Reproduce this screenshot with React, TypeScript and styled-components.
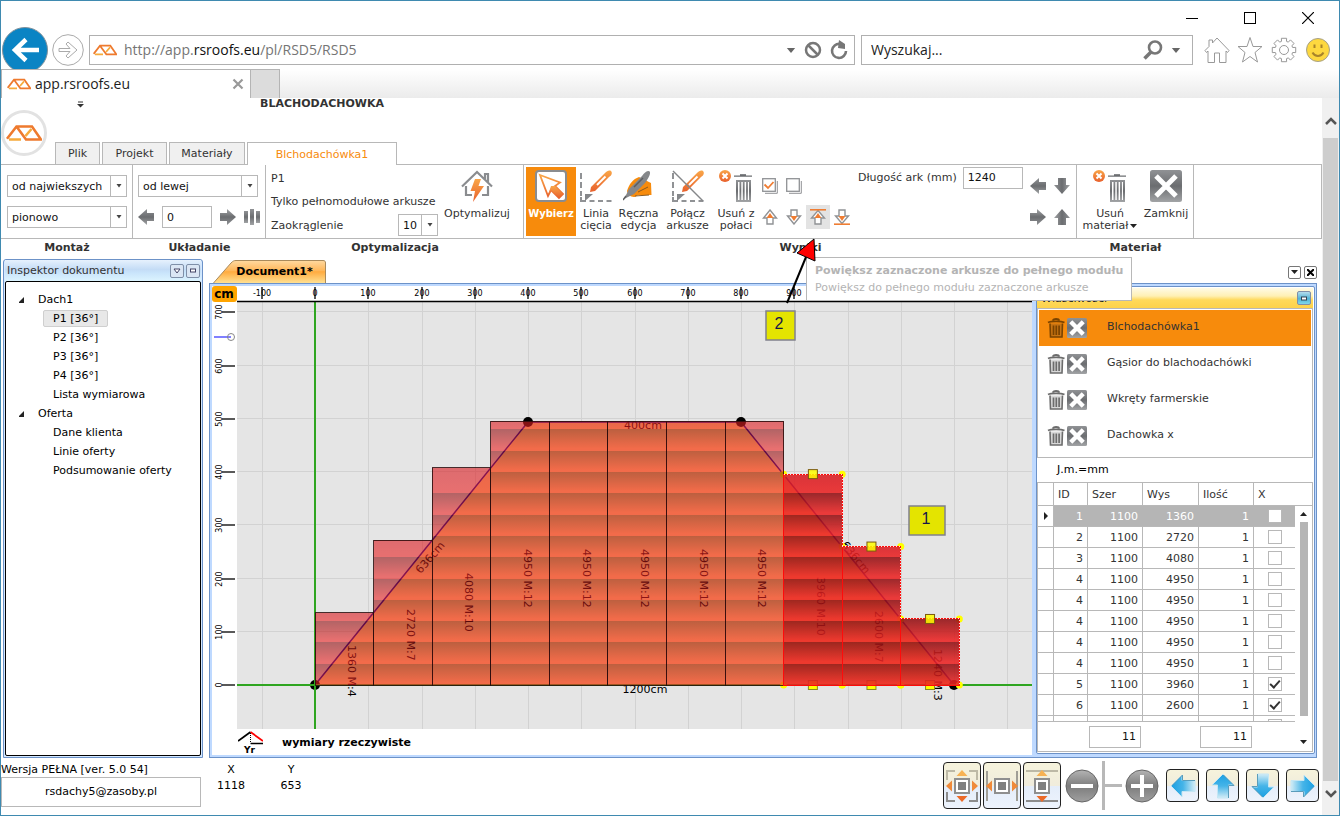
import React from "react";
import styled, { createGlobalStyle, css } from "styled-components";

const GlobalStyle = createGlobalStyle`
  *, *::before, *::after { box-sizing: border-box; }
  html, body { margin: 0; height: 100%; overflow: hidden; }
  body { font: 11px/13px "DejaVu Sans", Verdana, sans-serif; color: #333; background: #fff; }
  button, input, select { font: inherit; color: inherit; margin: 0; padding: 0; border-radius: 0; }
  button { background: none; border: 0; }
  svg { display: block; flex: none; }
`;

const LINE = "#b8b8b8";

/* ---------- browser window ---------- */

const Window = styled.div`
  display: flex; flex-direction: column; height: 100vh;
  border: 1px solid #3f8ab0; background: #fff; overflow: hidden;
`;
const TitleBar = styled.div`
  display: flex; justify-content: flex-end; align-items: center; height: 34px; padding-right: 23px; gap: 42px;
`;
const CaptionButton = styled.button`display: flex; width: 16px; height: 16px; align-items: center; justify-content: center;`;
const AddressRow = styled.div`
  display: flex; align-items: center; height: 34px; padding: 0 8px 4px 1px; gap: 6px; overflow: visible;
`;
const NavButton = styled.button`display: flex; margin-right: -1px;`;
const BackButton = styled(NavButton)`margin: -8px -2px -8px 0;`;
const FieldFrame = styled.label<{ $wide?: boolean }>`
  display: flex; align-items: center; height: 30px; border: 1px solid #b0b0b0; background: #fff;
  ${p => p.$wide ? css`flex: 1; padding: 0 6px 0 3px;` : css`width: 332px; padding: 0 11px 0 9px;`}
`;
const ChromeText = styled.span<{ $muted?: boolean }>`
  font-family: "Open Sans", "Noto Sans", sans-serif; font-size: 14px; line-height: 20px;
  color: ${p => (p.$muted ? "#757575" : "#1e1e1e")};
`;
const Url = styled(ChromeText)`flex: 1; padding-left: 7px; b { font-weight: 400; color: #111; }`;
const SearchInput = styled.input`
  flex: 1; min-width: 0; border: 0; outline: 0; background: none;
  font: 14px/20px "Open Sans", "Noto Sans", sans-serif; color: #222;
  &::placeholder { color: #222; opacity: 1; }
`;
const FieldIcons = styled.span`display: flex; align-items: center; gap: 8px;`;
const ToolIcons = styled.div`display: flex; gap: 7px; align-items: center; padding-left: 5px;`;
const TabStrip = styled.div`
  position: relative; display: flex; height: 29px; flex: none;
  background: linear-gradient(#fff, #f7f7f7 40%, #ebebeb);
`;
const PageTab = styled.div`
  display: flex; align-items: center; width: 250px; padding: 0 6px 0 5px; gap: 4px;
  background: #fff; border: 1px solid #b4b4b4; border-width: 1px 1px 0 1px;
`;
const PageTabName = styled(ChromeText)`flex: 1;`;
const NewTab = styled.button`width: 29px; background: #dcdcdc; border: 1px solid #b4b4b4; border-width: 1px 1px 0 0;`;
const Viewport = styled.div`display: flex; flex: 1; min-height: 0;`;
const PageScroll = styled.div`
  display: flex; flex-direction: column; align-items: center; width: 17px; background: #f0f0f0;
`;
const ScrollCap = styled.button<{ $h: number; $up?: boolean }>`
  display: flex; align-items: center; justify-content: center; width: 100%; height: ${p => p.$h}px;
  padding-top: ${p => (p.$up ? 6 : 0)}px; padding-bottom: ${p => (p.$up ? 0 : 8)}px;
`;
const ScrollThumb = styled.div`flex: 1; width: 15px; background: #cdcdcd;`;

/* ---------- ribbon ---------- */

const Page = styled.div`display: flex; flex-direction: column; flex: 1; min-width: 0;`;
const Header = styled.header`display: flex; height: 66px; align-items: flex-end;`;
const AppLogo = styled.button`
  display: flex; align-items: center; justify-content: center; align-self: center; width: 46px; height: 46px;
  margin: 3px 8px 0 0; border: 3px solid #e2e2e2; border-radius: 50%; background: #fff;
`;
const HeaderMain = styled.div`display: flex; flex-direction: column; justify-content: space-between; height: 66px; flex: 1;`;
const QuickBar = styled.div`display: flex; align-items: center; height: 12px; padding-left: 22px;`;
const DocName = styled.strong`margin-left: 176px; line-height: 12px;`;
const RibbonTabs = styled.nav`display: flex; gap: 2px; height: 22px;`;
const RibbonTab = styled.button<{ $active?: boolean; $w: number }>`
  width: ${p => p.$w}px; border: 1px solid ${LINE}; border-bottom: 0; background: #f0f0f0;
  ${p => p.$active && css`background: #fff; color: #f78b0c; height: 23px; z-index: 1;`}
`;
const Ribbon = styled.div`display: flex; height: 92px; flex: none;`;
const Group = styled.section<{ $w?: number }>`
  display: flex; flex-direction: column; ${p => (p.$w ? `width: ${p.$w}px;` : "flex: 1;")}
`;
const GroupBody = styled.div<{ $pad?: string }>`
  display: flex; height: 75px; padding: ${p => p.$pad || "0"};
  border: 1px solid ${LINE}; border-left: 0;
`;
const GroupTitle = styled.h2`margin: 0; font-size: 11px; line-height: 17px; text-align: center;`;
const Stack = styled.div<{ $gap: number; $w?: number }>`
  display: flex; flex-direction: column; gap: ${p => p.$gap}px; ${p => p.$w && `width: ${p.$w}px;`}
`;
const Inline = styled.div<{ $gap?: number }>`display: flex; align-items: center; gap: ${p => p.$gap || 0}px;`;
const SelectFrame = styled.label<{ $w: number }>`
  display: grid; width: ${p => p.$w}px; height: 22px;
  & > * { grid-area: 1 / 1; }
  & > svg { justify-self: end; width: 17px; height: 22px; border-left: 1px solid ${LINE}; pointer-events: none; }
`;
const SelectControl = styled.select`
  appearance: none; width: 100%; height: 22px; border: 1px solid ${LINE}; background: #fff; color: #111; padding: 0 0 0 4px; outline: 0;
`;
const TextInput = styled.input<{ $w: number; $right?: boolean }>`
  width: ${p => p.$w}px; height: 22px; border: 1px solid ${LINE}; background: #fff; color: #111; padding: 0 4px;
  text-align: ${p => (p.$right ? "right" : "left")}; outline: 0;
`;
const IconButton = styled.button<{ $hot?: boolean }>`
  display: flex; align-items: center; justify-content: center; width: 24px; height: 24px;
  background: ${p => (p.$hot ? "#e3e3e3" : "none")};
`;
const BigButton = styled.button<{ $w: number; $active?: boolean }>`
  display: flex; flex-direction: column; align-items: center; width: ${p => p.$w}px; height: 69px; padding-top: 3px; gap: 6px;
  line-height: 12px; white-space: nowrap;
  ${p => p.$active && css`background: #f78b0c; color: #fff; font-weight: 700; font-size: 10px;`}
`;
const OptimizeButton = styled(BigButton)`margin: 2px auto 0 2px;`;
const ToolGrid = styled.div<{ $cols: number }>`
  display: grid; grid-template-columns: repeat(${p => p.$cols}, 24px); row-gap: 7px; padding-top: 7px; align-content: start;
`;
const ArrowPad = styled(ToolGrid)`margin-left: auto; padding-right: 2px;`;
const LengthField = styled.label`display: flex; margin-left: 4px; gap: 6px; line-height: 22px; white-space: nowrap;`;
const OptionText = styled.span<{ $top: number }>`padding-top: ${p => p.$top}px; white-space: nowrap;`;
const RoundRow = styled.div`display: flex; align-items: center; justify-content: space-between;`;
const HotSpot = styled.div`position: relative;`;
const Tooltip = styled.div`
  position: absolute; left: 0; top: 52px; z-index: 5; width: 326px; height: 44px; padding: 4px 8px;
  border: 1px solid ${LINE}; background: #fff; color: #b4b4b4; line-height: 17px; white-space: nowrap;
`;
const Pointer = styled.svg`position: absolute; left: -22px; top: 32px; z-index: 6; pointer-events: none;`;

/* ---------- work area ---------- */

const Work = styled.main`display: flex; flex: 1; min-height: 0; padding: 3px 5px 0 2px; gap: 6px;`;
const Inspector = styled.aside`
  display: flex; flex-direction: column; width: 200px; border: 1px solid #6c92c8; border-radius: 3px 3px 0 0;
  background: #d4e8ff; padding: 0 1px 1px;
`;
const InspectorHead = styled.div`
  display: flex; align-items: center; height: 21px; padding: 0 1px 0 2px; gap: 2px; color: #333;
  background: linear-gradient(#e6f1fd, #c4dcf6 45%, #c9e4fb 60%, #dcf4ff);
  & > span { flex: 1; }
`;
const HeadButton = styled.button<{ $teal?: boolean }>`
  display: flex; align-items: center; justify-content: center; width: 14px; height: 14px; border-radius: 2px;
  border: 1px solid #7f8fa8; background: ${p => (p.$teal ? "linear-gradient(#b5dcec, #52b4d6 55%, #7fd6ea)" : "#dbe6f4")};
`;
const Tree = styled.ul`
  flex: 1; margin: 0; padding: 8px 0 0 13px; list-style: none; background: #fff; color: #000;
  border: 1px solid #000; border-radius: 2px;
`;
const Node = styled.li<{ $root?: boolean; $on?: boolean }>`
  display: flex; align-items: center; height: 19px; padding-left: ${p => (p.$root ? 0 : 24)}px; gap: 13px;
  & > span { padding: 1px 9px; border: 1px solid transparent; border-radius: 2px; }
  ${p => p.$root && css`& > span { padding: 0; }`}
  ${p => p.$on && css`& > span { background: #e8e8e8; border-color: #cfcfcf; }`}
`;
const Docs = styled.div`display: flex; flex-direction: column; flex: 1; min-width: 0;`;
const DocTabs = styled.div`display: flex; justify-content: space-between; height: 24px; align-items: center; padding-left: 2px;`;
const DocTab = styled.button`display: grid; height: 23px; align-self: flex-end; & > * { grid-area: 1 / 1; }`;
const DocTabLabel = styled.strong`padding: 5px 0 0 12px; font-size: 11px; color: #000; z-index: 1;`;
const DocButtons = styled.div`display: flex; gap: 3px; padding-top: 2px;`;
const DocButton = styled.button`
  display: flex; align-items: center; justify-content: center; width: 13px; height: 13px; border: 1px solid #777; border-radius: 2px;
`;
const DocPanel = styled.div`
  display: flex; flex: 1; min-height: 0; gap: 4px; padding: 2px 1px 2px 2px; border: 1px solid #6c92c8; background: #bed9ff;
`;
const CanvasColumn = styled.div`display: flex; flex-direction: column; flex: 1; min-width: 0; background: #fff;`;
const Drawing = styled.svg`flex: 1; width: 100%; min-height: 0; font-family: "DejaVu Sans", Verdana, sans-serif;`;
const CanvasFoot = styled.div`display: flex; align-items: center; height: 26px; padding-left: 26px; gap: 19px; color: #000;`;
const Side = styled.aside`
  display: flex; flex-direction: column; width: 279px; border: 1px solid #6c92c8; border-radius: 2px; background: #fff;
  margin-bottom: 1px; padding: 1px 1px 1px 0;
`;
const SideHead = styled.div`
  display: flex; align-items: center; justify-content: space-between; height: 20px; flex: none; padding: 0 2px 0 4px; color: #222;
  background: linear-gradient(#fffbe6, #fff0b4 40%, #ffd95a 60%, #fdd24a);
`;
const Materials = styled.ul`
  margin: 0; padding: 1px; list-style: none; border: 1px solid ${LINE}; height: 150px; flex: none;
`;
const Material = styled.li<{ $on?: boolean }>`
  display: flex; align-items: center; height: 36px; padding-left: 8px; gap: 2px;
  background: ${p => (p.$on ? "#f78b0c" : "#fff")};
  & > span { padding: 0 0 4px 18px; }
`;
const UnitNote = styled.p`margin: 0; padding-left: 20px; height: 24px; line-height: 24px; color: #000; flex: none;`;
const GridBox = styled.div`display: flex; flex: 1; min-height: 0; border: 1px solid ${LINE};`;
const GridMain = styled.div`display: flex; flex-direction: column; flex: 1; min-width: 0;`;
const GridClip = styled.div`flex: 1; min-height: 0; overflow: hidden;`;
const Table = styled.table`
  width: 100%; table-layout: fixed; border-collapse: separate; border-spacing: 0;
  th, td { height: 21px; padding: 0; border: 0 solid ${LINE}; border-width: 0 1px 1px 0; font-weight: 400; overflow: hidden; }
  th { height: 23px; text-align: left; padding-left: 4px; }
  td { text-align: right; padding-right: 4px; }
  td:first-child, td:last-child { padding: 0; }
`;
const Row = styled.tr<{ $on?: boolean }>`
  ${p => p.$on && css`& > td:not(:first-child) { background: #b5b5b5; color: #fff; border-right-color: #b5b5b5; }`}
`;
const Center = styled.span`display: flex; justify-content: center;`;
const Check = styled.input`
  appearance: none; display: block; width: 14px; height: 14px; border: 1px solid ${LINE}; background: #fff; position: relative;
  &:checked::after {
    content: ""; position: absolute; left: 1px; top: 2px; width: 10px; height: 6px;
    border: solid #333; border-width: 0 0 2px 2px; transform: rotate(-48deg);
  }
`;
const Summary = styled.div`
  display: flex; align-items: center; justify-content: space-between; height: 30px; flex: none; border-top: 1px solid ${LINE};
  padding: 0 43px 0 51px;
`;
const GridScroll = styled.div`
  display: flex; flex-direction: column; align-items: center; width: 17px; padding-bottom: 7px;
  &::before { content: ""; width: 100%; height: 23px; border-bottom: 1px solid ${LINE}; }
`;
const ScrollTick = styled.span`padding-top: 6px;`;
const GridThumb = styled.div`width: 8px; flex: 1; background: #b5b5b5; margin: 6px 0 24px;`;

/* ---------- status bar ---------- */

const Status = styled.footer`display: flex; height: 57px; flex: none; color: #000;`;
const Account = styled.div`width: 200px; padding-top: 5px;`;
const Mail = styled.div`
  height: 30px; margin-top: 1px; border: 1px solid ${LINE}; line-height: 28px; text-align: center;
`;
const Coords = styled.dl`
  display: grid; grid-template-columns: 60px 60px; grid-auto-flow: column; grid-template-rows: 16px 16px;
  margin: 4px auto 0 0; text-align: center; line-height: 16px;
  dt, dd { margin: 0; }
`;
const Controls = styled.div`display: flex; align-items: center; height: 55px; gap: 7px; padding-right: 3px;`;
const FitGroup = styled.div`display: flex; gap: 2px;`;
const GlossButton = styled.button<{ $tall?: boolean }>`
  display: flex; align-items: center; justify-content: center; width: ${p => (p.$tall ? 38 : 33)}px; height: ${p => (p.$tall ? 47 : 33)}px;
  border: 1px solid #222; border-radius: 4px; background: linear-gradient(#f6f3dc, #f0ecdc 50%, #e4edfa 52%, #edf3fc);
`;
const ZoomGroup = styled.div`display: flex; align-items: center; margin-left: -3px;`;
const ZoomSlider = styled.input`
  appearance: none; width: 20px; height: 49px; margin: 0 3px; background: none;
  &::-webkit-slider-runnable-track { height: 49px; background: linear-gradient(${LINE}, ${LINE}) center / 100% 3px no-repeat; }
  &::-webkit-slider-thumb { appearance: none; width: 3px; height: 49px; background: ${LINE}; }
`;

/* ---------- icons ---------- */

const HiddenSvg = styled.svg`position: absolute;`;
const Defs = () => (
  <HiddenSvg width="0" height="0" aria-hidden="true">
    <defs>
      <linearGradient id="or" x1="0" y1="0" x2="0" y2="1"><stop offset="0" stopColor="#f9a648" /><stop offset="1" stopColor="#e8602c" /></linearGradient>
      <linearGradient id="gr" x1="0" y1="0" x2="0" y2="1"><stop offset="0" stopColor="#909295" /><stop offset=".5" stopColor="#6b6d70" /><stop offset="1" stopColor="#a2a4a6" /></linearGradient>
      <linearGradient id="bl" x1="0" y1="0" x2="1" y2="0"><stop offset="0" stopColor="#1a9fe2" /><stop offset=".5" stopColor="#45b4e8" /><stop offset="1" stopColor="#d2ecf6" /></linearGradient>
      <linearGradient id="ball" x1="0" y1="0" x2="0" y2="1"><stop offset="0" stopColor="#b4b4b4" /><stop offset=".5" stopColor="#7c7c7c" /><stop offset="1" stopColor="#a0a0a0" /></linearGradient>
    </defs>
  </HiddenSvg>
);

const RoofLogo = ({ w }: { w: number }) => (
  <svg width={w} height={w / 2} viewBox="0 0 36 18" fill="none" strokeWidth="2.6">
    <path d="M1 14.800 10.500 2.500H26L35 15.500H20L10.500 2.500" stroke="#ee7a2e" />
    <path d="M3 15.500H15M19.500 12 25.500 5" stroke="#f6ab3c" />
  </svg>
);
const Caret = () => (
  <svg width="10" height="5" viewBox="0 0 12 6"><path d="M1 0H11L6 6Z" fill="#666" /></svg>
);
const Mini = ({ up }: { up?: boolean }) => (
  <svg width="7" height="4" viewBox="0 0 7 4"><path d={up ? "M0 4H7L3.500 0Z" : "M0 0H7L3.500 4Z"} fill="#222" /></svg>
);
const SelArrow = () => (
  <svg viewBox="-8 -11 16 22"><path d="M-2.500 -2H2.500L0 1.500Z" fill="#444" /></svg>
);
const GrayArrow = ({ dir }: { dir: number }) => (
  <svg width="16" height="16" viewBox="0 0 16 16">
    <path d="M0 8 9 0V4H16V12H9V16Z" fill="url(#gr)" transform={`rotate(${dir} 8 8)`} />
  </svg>
);
const Knife = () => (
  <g>
    <path d="M31 1c2 2 0 5-2 6L15 21 10 22 11 17 25 3c2-2 4-3 6-2Z" fill="url(#or)" />
    <path d="M25.500 6.500 17 15" stroke="#fff" strokeWidth="2" />
    <path d="M5 24H13L5 31Z" fill="#85878a" />
  </g>
);
const Dashes = () => (
  <g stroke="#909295" strokeWidth="2">
    <path d="M1 3V26" strokeDasharray="6 3" /><path d="M1 31H32" strokeDasharray="5 3.500" /><path d="M1 27v5" />
  </g>
);
const TrashShape = () => (
  <g fill="url(#gr)">
    <path d="M14 7V5.500H20V4H26V5.500H32V7Z" />
    <path fillRule="evenodd" d="M16 10H31V32H16ZM18 12V30H19.500V12ZM21.300 12V30H22.800V12ZM24.600 12V30H26.100V12ZM27.900 12V30H29V12Z" />
  </g>
);
const TrashX = () => (
  <svg width="34" height="32" viewBox="-1 0 34 32">
    <TrashShape />
    <circle cx="5" cy="6" r="6" fill="url(#or)" /><path d="M2.500 3.500 7.500 8.500M7.500 3.500 2.500 8.500" stroke="#fff" strokeWidth="2" />
  </svg>
);
const CloseTile = ({ s }: { s: number }) => (
  <svg width={s} height={s} viewBox="0 0 32 32">
    <rect width="32" height="32" rx="2.500" fill="url(#gr)" />
    <path d="M6 6 26 26M26 6 6 26" stroke="#fff" strokeWidth={s < 30 ? 7 : 5} />
  </svg>
);
const SmallTrash = ({ dark }: { dark?: boolean }) => (
  <svg width="18" height="20" viewBox="0 0 18 20">
    <g fill="none" stroke={dark ? "#7a4300" : "#6c6c6c"}>
      <path d="M3 5.500 3.500 19H15L15.500 5.500" strokeWidth="1.600" fill={dark ? "#c77312" : "#d8d8d8"} />
      <path d="M1 4.500C4 3 14 3 17.500 4.500M6 2.500C6 .500 12 .500 12 2.500" strokeWidth="1.800" />
      <path d="M6.500 7.500V17M9.300 7.500V17M12.100 7.500V17" strokeWidth="1.700" />
    </g>
  </svg>
);
const SheetArrow = ({ down, bar }: { down?: boolean; bar?: boolean }) => (
  <svg width="16" height="16" viewBox="0 0 16 16">
    <g transform={down ? "rotate(180 8 8)" : undefined}>
      <path d={bar ? "M8 1.500 14.500 9H11V15H5V9H1.500Z" : "M8 1 14.500 9H11V15H5V9H1.500Z"} fill="#fff" stroke="#909295" strokeWidth="1.400" />
      <path d="M8 4 11.500 9H4.500Z" fill="#ef7d33" />
      {bar && <path d="M0 .800H16" stroke="#ef7d33" strokeWidth="1.600" />}
    </g>
  </svg>
);
const Boxes = ({ on }: { on?: boolean }) => (
  <svg width="16" height="16" viewBox="0 0 16 16" fill="none">
    <path d="M3 15.300H15.300V3" stroke="#909295" /><rect x=".7" y=".7" width="12.600" height="12.600" fill="#fff" stroke="#909295" strokeWidth="1.300" />
    {on && <path d="M2.500 6.500 6 10 11.500 4" stroke="#ef7d33" strokeWidth="1.800" />}
  </svg>
);
const HouseBolt = () => (
  <svg width="32" height="32" viewBox="0 0 32 32" fill="none">
    <path d="M1 16.500 16 2 31 16.500M24 9V4H27V12M5 16V25H11M27 16V25H21" stroke="#8a8c8f" strokeWidth="2.200" />
    <path d="M14 9H20L17.500 16H23L12 32 14 21H9.500Z" fill="url(#or)" />
  </svg>
);
const CursorTile = () => (
  <svg width="32" height="32" viewBox="0 0 32 32">
    <rect x="1" y="1" width="30" height="30" rx="3" fill="#fff" stroke="#8a8c8f" strokeWidth="2" />
    <path d="M5 5 25 12.500 20 16 28 24 24 28 16 20 13 26Z" fill="#fff" stroke="url(#or)" strokeWidth="1.800" />
    <path d="M16 16 20 16 28 24 24 28 16 20 13 25Z" fill="url(#or)" />
  </svg>
);
const HandPen = () => (
  <svg width="32" height="32" viewBox="0 0 32 32">
    <path d="M4 21C6 14 10 9 16 7L28 13 28.500 25 15 25 12 27C9 27 5 26 4 21Z" fill="#f78b0c" />
    <path d="M26 1C23 1 21 3 19 6L6 19 1 29 11 24 22 13C25 9 29 2 26 1Z" fill="#85878a" />
    <path d="M20 8 11 17M3 26 0 30" stroke="#5c5e60" strokeWidth="1.500" />
    <path d="M15 22 25 17M12 26 26 25" stroke="#8a5a20" fill="none" />
  </svg>
);
const FitIcon = ({ h, v }: { h?: boolean; v?: boolean }) => (
  <svg width="34" height="36" viewBox="-17 -18 34 36">
    <rect x="-7" y="-7" width="14" height="14" fill="#fff" stroke="#8f8f8f" strokeWidth="2" /><rect x="-4" y="-4" width="8" height="8" fill="#808080" />
    {v && !h && <g strokeWidth="2"><path d="M-16 -15H16" stroke="#bdb9a6" /><path d="M-16 15H16" stroke="#8c8c8c" /></g>}
    {h && !v && <path d="M-15 -15V15M15 -15V15" stroke="#a09e96" strokeWidth="2" />}
    {h && v && <g fill="none" strokeWidth="2"><path d="M-7 -15H-15V-6M7 -15H15V-6" stroke="#bdb9a6" /><path d="M-7 15H-15V6M7 15H15V6" stroke="#8c8c8c" /></g>}
    {v && <g><path d="M0 -16 5.500 -10H-5.500Z" fill="#f7b254" /><path d="M0 16 5.500 10H-5.500Z" fill="#ec6a28" /></g>}
    {h && <path d="M-16 0 -10 -5.500V5.500ZM16 0 10 -5.500V5.500Z" fill="#ef8a3a" />}
  </svg>
);
const Ball = ({ plus }: { plus?: boolean }) => (
  <svg width="34" height="34" viewBox="0 0 34 34">
    <circle cx="17" cy="17" r="16" fill="url(#ball)" stroke="#666" />
    <path d={plus ? "M6 17H28M17 6V28" : "M6 17H28"} stroke="#fff" strokeWidth="4" />
  </svg>
);
const BlueArrow = ({ dir }: { dir: number }) => (
  <svg width="26" height="26" viewBox="0 0 26 26">
    <g transform={`rotate(${dir} 13 13)`}>
      <path d="M1 13 12 2V7.500H25V18.500H12V24Z" fill="url(#bl)" stroke="#c4e6f4" />
      <path d="M2 12.500 12.500 2V7.500H25" fill="none" stroke="#5a9cba" />
    </g>
  </svg>
);

/* ---------- roof drawing ---------- */

const K = 0.5325;
const OX = 103;
const OY = 399;
const px = (cm: number) => OX + cm * K;
const py = (cm: number) => OY - cm * K;
const MODULE = 40;

type Sheet = { h: number; bands: number; label: string; cy: number; sel?: boolean };
const sheets: Sheet[] = [
  { h: 136, bands: 3, label: "1360 M:4", cy: 388 },
  { h: 272, bands: 6, label: "2720 M:7", cy: 352 },
  { h: 408, bands: 9, label: "4080 M:10", cy: 316 },
  ...Array.from({ length: 5 }, () => ({ h: 495, bands: 12, label: "4950 M:12", cy: 292 })),
  { h: 396, bands: 9, label: "3960 M:10", cy: 320, sel: true },
  { h: 260, bands: 6, label: "2600 M:7", cy: 354, sel: true },
  { h: 124, bands: 2, label: "1240 M:3", cy: 392, sel: true },
];

const RoofDrawing = () => (
  <Drawing>
    <defs>
      <linearGradient id="band" x1="0" y1="0" x2="0" y2="1"><stop offset="0" stopColor="#910f12" /><stop offset=".9" stopColor="#eb2323" /></linearGradient>
      <linearGradient id="cap" x1="0" y1="0" x2="0" y2="1"><stop offset="0" stopColor="#d81c22" /><stop offset="1" stopColor="#eb2323" /></linearGradient>
    </defs>
    <rect x="25" y="16" width="100%" height="100%" fill="#e5e5e5" />
    {Array.from({ length: 30 }, (_, i) => i - 1).map(i => (
      <path key={i} d={`M${Math.round(px(i * 100)) + 0.5} 16V900`} stroke="#d2d2d2" />
    ))}
    {[1, 2, 3, 4, 5, 6, 7].map(i => (
      <path key={i} d={`M25 ${Math.round(py(i * 100)) - 0.5}H2400`} stroke="#d2d2d2" />
    ))}
    <path d={`M${px(0)} ${py(0)}L${px(400)} ${py(494)}H${px(800)}L${px(1200)} ${py(0)}Z`} fill="#ffda85" stroke="#000096" strokeWidth="1.500" />
    {[[0, 0], [400, 494], [800, 494], [1200, 0]].map(([x, y]) => <circle key={x} cx={px(x)} cy={py(y)} r="5" fill="#000" />)}
    <path d={`M${OX} 16V900M25 ${OY}H2400`} stroke="#2fa520" strokeWidth="2" />
    <g fontSize="11" textAnchor="middle" fill="#000">
      {sheets.map((s, i) => (
        <text key={i} transform={`translate(${Math.round(px(i * 110 + 55)) + 1} ${s.cy}) rotate(90)`} x="-29" y="-3" textAnchor="start">{s.label}</text>
      ))}
      <text x="431" y="143">400cm</text>
      <text x="433" y="407">1200cm</text>
      <text transform="translate(221 274) rotate(-49)">636cm</text>
      <text transform="translate(641 274) rotate(51)">636cm</text>
    </g>
    {sheets.map((s, i) => s.sel && (
      <g key={i} fill="#ff0" stroke="#8a8a20">
        <circle cx={px(i * 110)} cy={py(s.h)} r="3.500" stroke="none" /><circle cx={px(i * 110 + 110)} cy={py(s.h)} r="3.500" stroke="none" />
        <circle cx={px(i * 110)} cy={OY} r="3.500" stroke="none" /><circle cx={px(i * 110 + 110)} cy={OY} r="3.500" stroke="none" />
        <rect x={px(i * 110 + 55) - 4.5} y={OY - 4.5} width="9" height="9" />
      </g>
    ))}
    {sheets.map((s, i) => {
      const x = px(i * 110);
      const w = 110 * K;
      const top = py(s.h);
      const next = sheets[i + 1];
      return (
        <g key={i} shapeRendering="crispEdges">
          <g opacity={s.sel ? 0.88 : 0.6}>
            <rect x={x} y={top} width={w} height={py(s.bands * MODULE) - top} fill={s.h === 124 ? "url(#band)" : "url(#cap)"} />
            {Array.from({ length: s.bands }, (_, b) => (
              <rect key={b} x={x} y={py((b + 1) * MODULE)} width={w} height={MODULE * K} fill="url(#band)" />
            ))}
          </g>
          {s.sel
            ? <g fill="none"><rect x={x} y={top} width={w} height={s.h * K} stroke="#ff0a0a" />
              <path d={`M${x} ${top}h${w}v${next ? (s.h - next.h) * K : s.h * K}`} stroke="#ffe0d8" strokeDasharray="1 2" /></g>
            : <rect x={x} y={top} width={w} height={s.h * K} fill="none" stroke="#2a0c0c" strokeOpacity=".85" />}
        </g>
      );
    })}
    {sheets.map((s, i) => s.sel && (
      <rect key={i} x={px(i * 110 + 55) - 4.5} y={py(s.h) - 4.5} width="9" height="9" fill="#ff0" fillOpacity=".85" stroke="#7a5a10" />
    ))}
    <rect x="25" y="0" width="100%" height="16" fill="#fff" />
    <rect x="0" y="0" width="25" height="100%" fill="#fff" />
    <path d="M25 15.500H2400" stroke="#000" strokeWidth="1.500" />
    <g fontSize="8" textAnchor="middle" fill="#000">
      {Array.from({ length: 11 }, (_, i) => i - 1).map(i => (
        <g key={i}><path d={`M${Math.round(px(i * 100))} 1V13`} stroke="#222" strokeWidth="1.500" /><text x={Math.round(px(i * 100))} y="10">{i * 100}</text></g>
      ))}
      {Array.from({ length: 8 }, (_, i) => i).map(i => (
        <g key={i}><path d={`M10 ${Math.round(py(i * 100))}H23`} stroke="#222" strokeWidth="1.500" />
          <text transform={`translate(10 ${Math.round(py(i * 100))}) rotate(-90)`}>{i * 100}</text></g>
      ))}
    </g>
    <path d="M2 51H19" stroke="#8080ff" strokeWidth="2" /><circle cx="19" cy="51" r="3.500" fill="none" stroke="#888" />
    <rect width="25" height="16" rx="3" fill="#ffa500" />
    <text x="12" y="12" textAnchor="middle" fontSize="12" fontWeight="700">cm</text>
    <g fill="#e4e400" stroke="#80808c" strokeWidth="1.500"><rect x="554" y="25" width="29" height="29" /><rect x="697" y="220" width="36" height="29" /></g>
    <g fontSize="16" fill="#15154a" textAnchor="middle" fontFamily="Liberation Sans, Arial, sans-serif"><text x="567" y="43">2</text><text x="714" y="238">1</text></g>
  </Drawing>
);

/* ---------- page parts ---------- */

const Select = ({ label, value, w }: { label: string; value: string; w: number }) => (
  <SelectFrame $w={w}>
    <SelectControl aria-label={label} defaultValue={value}><option>{value}</option></SelectControl>
    <SelArrow />
  </SelectFrame>
);

const gearPath = Array.from({ length: 8 }, (_, i) => {
  const p = (r: number, a: number) => `${(r * Math.cos(a)).toFixed(2)} ${(r * Math.sin(a)).toFixed(2)}`;
  const a = (i * Math.PI) / 4;
  return `${i ? "L" : "M"}${p(9, a - 0.28)}L${p(12, a - 0.22)}L${p(12, a + 0.22)}L${p(9, a + 0.28)}`;
}).join("") + "Z";

const Chrome = () => (
  <>
    <TitleBar>
      <CaptionButton aria-label="Minimalizuj"><svg width="12" height="12"><path d="M0 6.500H12" stroke="#000" /></svg></CaptionButton>
      <CaptionButton aria-label="Maksymalizuj"><svg width="12" height="12"><rect x=".5" y=".5" width="11" height="11" fill="none" stroke="#000" /></svg></CaptionButton>
      <CaptionButton aria-label="Zamknij"><svg width="12" height="12"><path d="M0 0 12 12M12 0 0 12" stroke="#000" strokeWidth="1.200" /></svg></CaptionButton>
    </TitleBar>
    <AddressRow>
      <BackButton aria-label="Wstecz">
        <svg width="46" height="46" viewBox="0 0 46 46"><circle cx="23" cy="23" r="22.500" fill="#0a84c4" stroke="#80909a" />
          <path d="M37 23H14M24 12.500 13 23 24 33.500" fill="none" stroke="#fff" strokeWidth="4.500" /></svg>
      </BackButton>
      <NavButton aria-label="Dalej">
        <svg width="32" height="32" viewBox="0 0 32 32" fill="#fff" stroke="#aaa"><circle cx="16" cy="16" r="15.300" />
          <path d="M7 14.500H18L14 10 16 8 25 16 16 24 14 22 18 17.500H7Z" /></svg>
      </NavButton>
      <FieldFrame $wide>
        <RoofLogo w={24} />
        <Url $muted>http://app.<b>rsroofs.eu</b>/pl/RSD5/RSD5</Url>
        <FieldIcons>
          <Caret />
          <svg width="18" height="18" viewBox="0 0 18 18" fill="none" stroke="#777" strokeWidth="2.500"><circle cx="9" cy="9" r="7" /><path d="M4 4 14 14" /></svg>
          <svg width="18" height="20" viewBox="0 0 18 20" fill="none" stroke="#777" strokeWidth="2.600"><path d="M10 4A7 7 0 1 0 16 11" /><path d="M9 0 15 4 15 9 8 8Z" fill="#777" stroke="none" /></svg>
        </FieldIcons>
      </FieldFrame>
      <FieldFrame>
        <SearchInput placeholder="Wyszukaj..." aria-label="Wyszukaj" />
        <FieldIcons>
          <svg width="20" height="20" viewBox="0 0 20 20" fill="none" stroke="#777" strokeWidth="2.600"><circle cx="12" cy="7.500" r="6" /><path d="M8 12 1.500 18.500" strokeWidth="3.500" /></svg>
          <Caret />
        </FieldIcons>
      </FieldFrame>
      <ToolIcons>
        <svg width="26" height="28" viewBox="0 0 26 28" fill="#fff" stroke="#999"><path d="M1 14.500 5 10.500V4H8.500V7L13 2 25 14.500 23.500 16.500 22 15V26.500H15.500V17H10.500V26.500H4V15L2.500 16.500Z" /></svg>
        <svg width="26" height="28" viewBox="0 0 26 28" fill="#fff" stroke="#999"><path d="M13 1.500 16 10.500H25L18 16.500 20.500 26 13 20.500 5.500 26 8 16.500 1 10.500H10Z" /></svg>
        <svg width="28" height="28" viewBox="-14 -14 28 28" fill="none" stroke="#999"><path d={gearPath} /><circle r="4.500" /></svg>
        <svg width="26" height="28" viewBox="0 0 26 28"><circle cx="13" cy="14" r="11.500" fill="#fdd83f" stroke="#a5a08a" />
          <path d="M9.500 8.500V12M16.500 8.500V12M7.500 16.500C10 21 16 21 18.500 16.500" fill="none" stroke="#a8842a" strokeWidth="2" /></svg>
      </ToolIcons>
    </AddressRow>
    <TabStrip>
      <PageTab>
        <RoofLogo w={24} /><PageTabName>app.rsroofs.eu</PageTabName>
        <svg width="12" height="12" viewBox="0 0 12 12"><path d="M1.500 1.500 10.500 10.500M10.500 1.500 1.500 10.500" stroke="#999" strokeWidth="2.200" /></svg>
      </PageTab>
      <NewTab aria-label="Nowa karta" />
    </TabStrip>
  </>
);

const RibbonBar = () => (
  <Ribbon>
    <Group $w={132}>
      <GroupBody $pad="10px 0 0 6px"><Stack $gap={9}>
        <Select label="Kolejność" value="od najwiekszych" w={120} /><Select label="Kierunek" value="pionowo" w={120} />
      </Stack></GroupBody>
      <GroupTitle>Montaż</GroupTitle>
    </Group>
    <Group $w={133}>
      <GroupBody $pad="10px 0 0 5px"><Stack $gap={9}>
        <Select label="Strona" value="od lewej" w={120} />
        <Inline $gap={8}>
          <button aria-label="W lewo"><GrayArrow dir={0} /></button>
          <TextInput $w={50} aria-label="Przesunięcie" defaultValue="0" />
          <button aria-label="W prawo"><GrayArrow dir={180} /></button>
          <svg width="16" height="16" viewBox="0 0 16 16" fill="url(#gr)"><rect y="2" width="4" height="12" /><rect x="6" width="4" height="16" /><rect x="12" y="2" width="4" height="12" /></svg>
        </Inline>
      </Stack></GroupBody>
      <GroupTitle>Układanie</GroupTitle>
    </Group>
    <Group $w={258}>
      <GroupBody $pad="0 0 0 5px">
        <Stack $gap={6} $w={167}>
          <OptionText $top={7}>P1</OptionText>
          <OptionText $top={4}>Tylko pełnomodułowe arkusze</OptionText>
          <RoundRow><span>Zaokrąglenie</span><Select label="Zaokrąglenie" value="10" w={40} /></RoundRow>
        </Stack>
        <OptimizeButton $w={74}><HouseBolt />Optymalizuj</OptimizeButton>
      </GroupBody>
      <GroupTitle>Optymalizacja</GroupTitle>
    </Group>
    <Group $w={553}>
      <GroupBody $pad="2px 0 0 2px">
        <BigButton $w={50} $active><CursorTile />Wybierz</BigButton>
        <BigButton $w={40}><svg width="32" height="32" viewBox="0 0 32 32"><Dashes /><Knife /></svg><span>Linia<br />cięcia</span></BigButton>
        <BigButton $w={45}><HandPen /><span>Ręczna<br />edycja</span></BigButton>
        <BigButton $w={53}><svg width="32" height="32" viewBox="0 0 32 32"><Dashes /><Knife /><path d="M1 1 31 31" stroke="#85878a" strokeWidth="1.500" /></svg><span>Połącz<br />arkusze</span></BigButton>
        <BigButton $w={44}><TrashX /><span>Usuń z<br />połaci</span></BigButton>
        <ToolGrid $cols={4}>
          <IconButton aria-label="Zaznacz wszystko"><Boxes on /></IconButton>
          <IconButton aria-label="Odznacz"><Boxes /></IconButton><span /><span />
          <IconButton aria-label="Powiększ"><SheetArrow /></IconButton>
          <IconButton aria-label="Pomniejsz"><SheetArrow down /></IconButton>
          <HotSpot>
            <IconButton $hot aria-label="Do pełnego modułu"><SheetArrow bar /></IconButton>
            <Tooltip role="tooltip"><strong>Powiększ zaznaczone arkusze do pełnego modułu</strong><br />Powiększ do pełnego modułu zaznaczone arkusze</Tooltip>
            <Pointer width="34" height="68"><path d="M3 66 22 20" stroke="#000" strokeWidth="2" /><path d="M30 2 31 24 13 16Z" fill="#f00" stroke="#000" /></Pointer>
          </HotSpot>
          <IconButton aria-label="Pomniejsz do modułu"><SheetArrow down bar /></IconButton>
        </ToolGrid>
        <LengthField>Długość ark (mm)<TextInput $w={60} defaultValue="1240" /></LengthField>
        <ArrowPad $cols={2}>
          <IconButton aria-label="Lewo"><GrayArrow dir={0} /></IconButton><IconButton aria-label="Dół"><GrayArrow dir={270} /></IconButton>
          <IconButton aria-label="Prawo"><GrayArrow dir={180} /></IconButton><IconButton aria-label="Góra"><GrayArrow dir={90} /></IconButton>
        </ArrowPad>
      </GroupBody>
      <GroupTitle>Wyniki</GroupTitle>
    </Group>
    <Group $w={117}>
      <GroupBody $pad="2px 0 0 4px">
        <BigButton $w={58}><TrashX /><span>Usuń<br /><Inline as="span" $gap={2}>materiał<Mini /></Inline></span></BigButton>
        <BigButton $w={54}><CloseTile s={32} />Zamknij</BigButton>
      </GroupBody>
      <GroupTitle>Materiał</GroupTitle>
    </Group>
    <Group><GroupBody /></Group>
  </Ribbon>
);

const tree: { t: string; root?: boolean; on?: boolean }[] = [
  { t: "Dach1", root: true }, { t: "P1 [36°]", on: true }, { t: "P2 [36°]" }, { t: "P3 [36°]" }, { t: "P4 [36°]" },
  { t: "Lista wymiarowa" }, { t: "Oferta", root: true }, { t: "Dane klienta" }, { t: "Linie oferty" }, { t: "Podsumowanie oferty" },
];
const materials = ["Blchodachówka1", "Gąsior do blachodachówki", "Wkręty farmerskie", "Dachowka x"];
const rows: [number, number, boolean][] = [
  [1, 1360, false], [2, 2720, false], [3, 4080, false], [4, 4950, false], [4, 4950, false], [4, 4950, false],
  [4, 4950, false], [4, 4950, false], [5, 3960, true], [6, 2600, true],
];

const Properties = () => (
  <Side>
    <SideHead>Właściwości<HeadButton $teal aria-label="Zwiń"><svg width="6" height="5"><rect x=".5" y="1" width="5" height="3" fill="#fff" stroke="#345" /></svg></HeadButton></SideHead>
    <Materials>
      {materials.map((m, i) => <Material key={m} $on={i === 0}><SmallTrash dark={i === 0} /><CloseTile s={20} /><span>{m}</span></Material>)}
    </Materials>
    <UnitNote>J.m.=mm</UnitNote>
    <GridBox>
      <GridMain>
        <GridClip>
          <Table>
            <colgroup><col width="16" /><col width="34" /><col width="55" /><col width="56" /><col width="55" /><col width="42" /></colgroup>
            <thead><tr><th /><th>ID</th><th>Szer</th><th>Wys</th><th>Ilość</th><th>X</th></tr></thead>
            <tbody>
              {rows.map(([id, h, c], i) => (
                <Row key={i} $on={i === 0}>
                  <td>{i === 0 && <Center><svg width="4" height="8"><path d="M0 0 4 4 0 8Z" fill="#222" /></svg></Center>}</td>
                  <td>{id}</td><td>1100</td><td>{h}</td><td>1</td>
                  <td><Center><Check type="checkbox" defaultChecked={c} aria-label={`Wiersz ${i + 1}`} /></Center></td>
                </Row>
              ))}
              <Row><td /><td /><td /><td /><td /><td><Center><Check type="checkbox" aria-label="Wiersz 11" /></Center></td></Row>
            </tbody>
          </Table>
        </GridClip>
        <Summary><TextInput $w={52} $right readOnly value="11" aria-label="Suma szer" /><TextInput $w={52} $right readOnly value="11" aria-label="Suma ilość" /></Summary>
      </GridMain>
      <GridScroll><ScrollTick><Mini up /></ScrollTick><GridThumb /><Mini /></GridScroll>
    </GridBox>
  </Side>
);

export default function App() {
  return (
    <>
      <GlobalStyle />
      <Defs />
      <Window>
        <Chrome />
        <Viewport>
          <Page>
            <Header>
              <AppLogo aria-label="Menu"><RoofLogo w={36} /></AppLogo>
              <HeaderMain>
                <QuickBar><svg width="7" height="8"><path d="M1 2H6" stroke="#333" /><path d="M0 4H7L3.500 7.500Z" fill="#333" /></svg><DocName>BLACHODACHOWKA</DocName></QuickBar>
                <RibbonTabs>
                  <RibbonTab $w={45}>Plik</RibbonTab><RibbonTab $w={65}>Projekt</RibbonTab>
                  <RibbonTab $w={76}>Materiały</RibbonTab><RibbonTab $w={150} $active>Blchodachówka1</RibbonTab>
                </RibbonTabs>
              </HeaderMain>
            </Header>
            <RibbonBar />
            <Work>
              <Inspector>
                <InspectorHead>
                  <span>Inspektor dokumentu</span>
                  <HeadButton aria-label="Menu panelu"><svg width="8" height="6"><path d="M1 1H7L4 5Z" fill="#fff" stroke="#446" /></svg></HeadButton>
                  <HeadButton aria-label="Zwiń"><svg width="6" height="5"><rect x=".5" y="1" width="5" height="3" fill="#fff" stroke="#446" /></svg></HeadButton>
                </InspectorHead>
                <Tree>
                  {tree.map(n => (
                    <Node key={n.t} $root={n.root} $on={n.on}>
                      {n.root && <svg width="5" height="6"><path d="M5 0V6H-1Z" fill="#222" /></svg>}<span>{n.t}</span>
                    </Node>
                  ))}
                </Tree>
              </Inspector>
              <Docs>
                <DocTabs>
                  <DocTab>
                    <svg width="115" height="23" viewBox="0 0 115 23">
                      <defs><linearGradient id="tab" x1="0" y1="0" x2="0" y2="1"><stop offset="0" stopColor="#ffd9a0" /><stop offset=".45" stopColor="#ffb75a" /><stop offset=".5" stopColor="#ffab3f" /><stop offset="1" stopColor="#ffe092" /></linearGradient></defs>
                      <path d="M2.500 23 20 3C22 1 23 .500 25 .500H112C114 .500 114.500 1.500 114.500 3V23" fill="url(#tab)" stroke="#a98a5c" />
                    </svg>
                    <DocTabLabel>Document1*</DocTabLabel>
                  </DocTab>
                  <DocButtons>
                    <DocButton aria-label="Lista dokumentów"><Mini /></DocButton>
                    <DocButton aria-label="Zamknij dokument"><svg width="7" height="7"><path d="M0 0 7 7M7 0 0 7" stroke="#000" strokeWidth="2" /></svg></DocButton>
                  </DocButtons>
                </DocTabs>
                <DocPanel>
                  <CanvasColumn>
                    <RoofDrawing />
                    <CanvasFoot>
                      <svg width="25" height="24" viewBox="0 0 25 24" fill="none">
                        <path d="M0 11 12.500 2" stroke="#000" strokeWidth="1.800" /><path d="M12.500 2 25 11" stroke="#f00" strokeWidth="1.800" />
                        <path d="M12.500 3V13" stroke="#000" strokeDasharray="1 1" /><path d="M12.500 13.500H25" stroke="#000" strokeWidth="1.500" />
                        <text x="6" y="23" fontSize="9" fontWeight="700" fill="#000" fontFamily="DejaVu Sans, sans-serif">Yr</text>
                      </svg>
                      <strong>wymiary rzeczywiste</strong>
                    </CanvasFoot>
                  </CanvasColumn>
                  <Properties />
                </DocPanel>
              </Docs>
            </Work>
            <Status>
              <Account>Wersja PEŁNA [ver. 5.0 54]<Mail>rsdachy5@zasoby.pl</Mail></Account>
              <Coords><dt>X</dt><dd>1118</dd><dt>Y</dt><dd>653</dd></Coords>
              <Controls>
                <FitGroup>
                  <GlossButton $tall aria-label="Dopasuj"><FitIcon h v /></GlossButton>
                  <GlossButton $tall aria-label="Dopasuj szerokość"><FitIcon h /></GlossButton>
                  <GlossButton $tall aria-label="Dopasuj wysokość"><FitIcon v /></GlossButton>
                </FitGroup>
                <ZoomGroup>
                  <button aria-label="Pomniejsz widok"><Ball /></button>
                  <ZoomSlider type="range" aria-label="Powiększenie" defaultValue="0" />
                  <button aria-label="Powiększ widok"><Ball plus /></button>
                </ZoomGroup>
                <GlossButton aria-label="Przesuń w lewo"><BlueArrow dir={0} /></GlossButton>
                <GlossButton aria-label="Przesuń w górę"><BlueArrow dir={90} /></GlossButton>
                <GlossButton aria-label="Przesuń w dół"><BlueArrow dir={270} /></GlossButton>
                <GlossButton aria-label="Przesuń w prawo"><BlueArrow dir={180} /></GlossButton>
              </Controls>
            </Status>
          </Page>
          <PageScroll>
            <ScrollCap $h={40} $up aria-label="W górę"><svg width="12" height="10"><path d="M1 8 6 3 11 8" fill="none" stroke="#555" strokeWidth="2.500" /></svg></ScrollCap>
            <ScrollThumb />
            <ScrollCap $h={34} aria-label="W dół"><svg width="12" height="10"><path d="M1 2 6 7 11 2" fill="none" stroke="#555" strokeWidth="2.500" /></svg></ScrollCap>
          </PageScroll>
        </Viewport>
      </Window>
    </>
  );
}
